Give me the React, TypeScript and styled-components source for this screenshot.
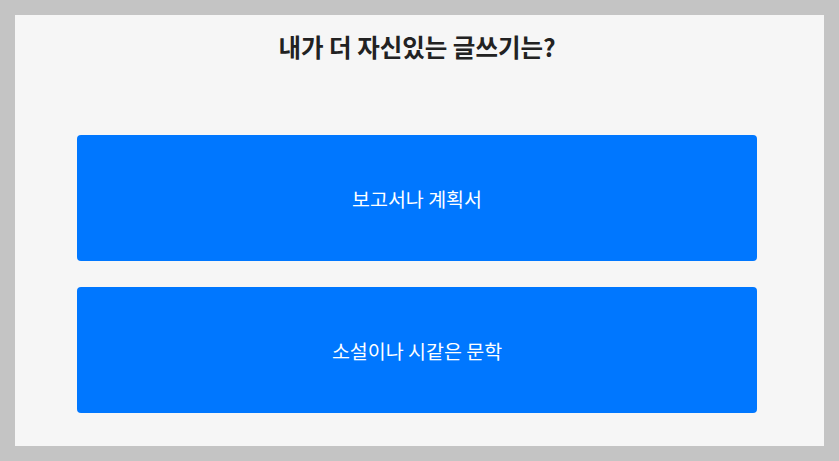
import React from 'react';
import styled, { createGlobalStyle } from 'styled-components';

const GlobalStyle = createGlobalStyle`
  html, body {
    margin: 0;
    padding: 0;
    background: #c4c4c4;
    font-family: "Noto Sans CJK KR", "Noto Sans", sans-serif;
  }
`;

const Page = styled.div`
  padding: 15px;
  box-sizing: border-box;
  height: 461px;
`;

const Panel = styled.main`
  height: 100%;
  background: #f6f6f6;
  box-sizing: border-box;
  padding: 17px 67px 0 62px;
  display: flex;
  flex-direction: column;
`;

const Title = styled.h2`
  margin: 0;
  font-size: 24.5px;
  line-height: 30px;
  font-weight: 700;
  color: #222;
  text-align: center;
`;

const Choices = styled.div`
  margin-top: 73px;
  display: flex;
  flex-direction: column;
  gap: 26px;
`;

const Choice = styled.button`
  width: 680px;
  height: 126px;
  border: none;
  border-radius: 4px;
  background: #0077ff;
  color: #fff;
  font-family: inherit;
  font-size: 19.5px;
  cursor: pointer;
`;

const choices = ['보고서나 계획서', '소설이나 시같은 문학'];

const App: React.FC = () => {
  return (
    <>
      <GlobalStyle />
      <Page>
        <Panel>
          <Title>내가 더 자신있는 글쓰기는?</Title>
          <Choices>
            {choices.map((c) => (
              <Choice key={c}>{c}</Choice>
            ))}
          </Choices>
        </Panel>
      </Page>
    </>
  );
};

export default App;
